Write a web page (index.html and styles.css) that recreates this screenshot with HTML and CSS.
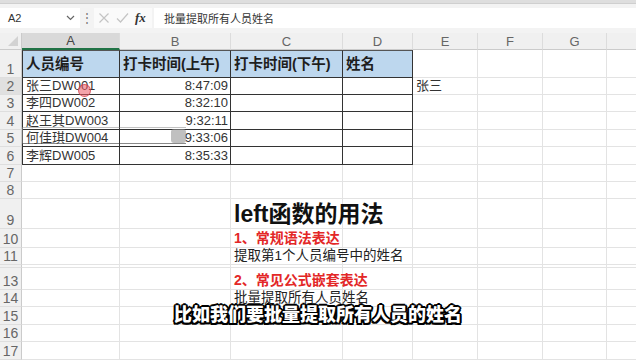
FILE: index.html
```html
<!DOCTYPE html>
<html lang="zh-CN">
<head>
  <meta charset="UTF-8">
  <title>left函数的用法</title>
  <link rel="stylesheet" href="styles.css">
</head>
<body>
  <div class="app">
    <div class="ribbon-edge"></div>
    <div class="formula-bar">
      <div class="name-box">
        <span>A2</span>
        <svg class="chevron" width="9" height="6" viewBox="0 0 9 6"><path d="M1 1 L4.5 4.5 L8 1" fill="none" stroke="#666" stroke-width="1.2"/></svg>
      </div>
      <div class="dots">⋮</div>
      <div class="fx-icons">
        <svg width="12" height="12" viewBox="0 0 12 12"><path d="M1.5 1.5 L10.5 10.5 M10.5 1.5 L1.5 10.5" stroke="#c4c4c4" stroke-width="1.2"/></svg>
        <svg width="13" height="12" viewBox="0 0 13 12"><path d="M1 6.5 L4.5 10 L12 1.5" fill="none" stroke="#c4c4c4" stroke-width="1.2"/></svg>
        <span class="fx">fx</span>
      </div>
      <div class="formula-input">批量提取所有人员姓名</div>
    </div>

    <div class="sheet" id="sheet"></div>

    <!-- 录屏残留的选区和鼠标 -->
    <div class="drag-box"><span class="drag-handle"></span></div>
    <div class="cursor-dot"></div>
    <div class="subtitle">比如我们要批量提取所有人员的姓名</div>
  </div>

  <script>
    // H 列只露出一截，标题字母在画面外
    const cols = ['A', 'B', 'C', 'D', 'E', 'F', 'G', 'H'];
    const visibleLetters = ['A', 'B', 'C', 'D', 'E', 'F', 'G'];
    const totalRows = 17;

    const data = {
      A1: '人员编号', B1: '打卡时间(上午)', C1: '打卡时间(下午)', D1: '姓名',
      A2: '张三DW001', B2: '8:47:09', E2: '张三',
      A3: '李四DW002', B3: '8:32:10',
      A4: '赵王其DW003', B4: '9:32:11',
      A5: '何佳琪DW004', B5: '9:33:06',
      A6: '李辉DW005', B6: '8:35:33',
      C9: 'left函数的用法',
      C10: '1、常规语法表达',
      C11: '提取第1个人员编号中的姓名',
      C13: '2、常见公式嵌套表达',
      C14: '批量提取所有人员姓名'
    };

    const extra = {
      C9: 'title', C10: 'note red', C11: 'note', C13: 'note red', C14: 'note'
    };

    const sheet = document.getElementById('sheet');

    function add(cls, text) {
      const div = document.createElement('div');
      div.className = cls;
      if (text) div.textContent = text;
      sheet.appendChild(div);
      return div;
    }

    // 列标题
    add('corner');
    cols.forEach(c => {
      const label = visibleLetters.includes(c) ? c : '';
      add('col-head' + (c === 'A' ? ' selected' : ''), label);
    });

    // 行
    for (let r = 1; r <= totalRows; r++) {
      add('row-head' + (r === 2 ? ' selected' : ''), String(r));
      cols.forEach((c, i) => {
        const key = c + r;
        let cls = 'cell';
        const inTable = i < 4 && r <= 6;
        if (inTable) {
          cls += ' tb';
          if (r === 1) cls += ' tb-top th';
          if (i === 0) cls += ' tb-left';
          if (c === 'B' && r > 1) cls += ' num';
        }
        if (extra[key]) cls += ' ' + extra[key];
        add(cls, data[key]);
      });
    }
  </script>
</body>
</html>
```

FILE: styles.css
```css
* {
  box-sizing: border-box;
}
body {
  margin: 0;
  background-color: #fff;
  font-family: "Liberation Sans", "Noto Sans CJK SC", sans-serif;
  overflow: hidden;
}
.app {
  position: relative;
  width: 636px;
  height: 360px;
  overflow: hidden;
}
.ribbon-edge {
  height: 4px;
  background-color: #dedede;
  border-bottom: 1px solid #cfcfcf;
}
.formula-bar {
  height: 29px;
  display: flex;
  align-items: center;
  padding: 3px 0 5px;
  background-color: #f3f3f3;
}
.name-box {
  width: 80px;
  height: 20px;
  background-color: #fff;
  display: flex;
  align-items: center;
  justify-content: space-between;
  padding: 0 5px 0 8px;
  font-size: 11px;
  color: #333;
}
.dots {
  width: 14px;
  text-align: center;
  font-size: 12px;
  color: #777;
}
.fx-icons {
  width: 58px;
  height: 20px;
  display: flex;
  align-items: center;
  gap: 6px;
  padding-left: 4px;
  background-color: #fafafa;
}
.fx {
  font-family: "Liberation Serif", serif;
  font-style: italic;
  font-weight: bold;
  font-size: 13px;
  color: #333;
}
.formula-input {
  flex: 1;
  height: 20px;
  margin-left: 2px;
  background-color: #fff;
  padding-left: 10px;
  display: flex;
  align-items: center;
  font-size: 11px;
  color: #333;
}
.sheet {
  display: grid;
  width: 700px;
  grid-template-columns: 22px 98px 111px 112px 70px 65px 65px 64px 93px;
  grid-template-rows: 17px 28px 17px 17px 18px 17px 18px 17px 17px 30px 19px 17px 3px 22px 17px 18px 17px 18px;
}
.corner {
  background-color: #f0f0f0;
  border-bottom: 1px solid #cbcbcb;
  border-right: 1px solid #cbcbcb;
  position: relative;
}
.corner::after {
  content: "";
  position: absolute;
  right: 3px;
  bottom: 3px;
  border-left: 10px solid transparent;
  border-bottom: 10px solid #d2d2d2;
}
.col-head {
  background-color: #f0f0f0;
  border-bottom: 1px solid #cbcbcb;
  border-right: 1px solid #dcdcdc;
  display: flex;
  align-items: center;
  justify-content: center;
  font-size: 13px;
  color: #666;
}
.col-head.selected {
  background-color: #d9d9d9;
  border-bottom: 2px solid #217346;
  color: #444;
}
.row-head {
  background-color: #f0f0f0;
  border-right: 1px solid #cbcbcb;
  border-bottom: 1px solid #dedede;
  display: flex;
  align-items: flex-end;
  justify-content: center;
  font-size: 14px;
  line-height: 16px;
  color: #666;
  overflow: hidden;
}
.row-head.selected {
  background-color: #e0e0e0;
}
.cell {
  border-right: 1px solid #e3e3e3;
  border-bottom: 1px solid #e3e3e3;
  display: flex;
  align-items: flex-end;
  padding: 0 3px 0 3px;
  white-space: nowrap;
  font-size: 13px;
  line-height: 16px;
  color: #333;
  min-width: 0;
}
.cell.tb {
  border-right-color: #333;
  border-bottom-color: #333;
}
.cell.tb-top {
  border-top: 1px solid #555;
}
.cell.tb-left {
  border-left: 1px solid #333;
}
.cell.th {
  background-color: #bdd7ee;
  align-items: center;
  font-size: 14.5px;
  font-weight: bold;
  color: #1e1e1e;
}
.cell.num {
  justify-content: flex-end;
  padding-right: 2px;
}
.cell.title {
  font-size: 23px;
  line-height: 28px;
  font-weight: bold;
  color: #111;
}
.cell.note {
  font-size: 13.5px;
  line-height: 17px;
  color: #222;
}
.cell.red {
  font-size: 14px;
  font-weight: bold;
  color: #e32727;
}
.drag-box {
  position: absolute;
  left: 22px;
  top: 127px;
  width: 164px;
  height: 17px;
  border-left: 1px solid #666;
  border-top: 1px solid rgba(120,120,120,0.45);
  border-bottom: 1px solid rgba(60,60,60,0.6);
}
.drag-handle {
  position: absolute;
  right: 0;
  top: 1px;
  width: 15px;
  height: 14px;
  border-radius: 3px;
  background-color: rgba(150,150,150,0.6);
}
.cursor-dot {
  position: absolute;
  left: 78px;
  top: 84px;
  width: 13px;
  height: 13px;
  border-radius: 50%;
  background-color: rgba(235,90,100,0.55);
  border: 1px solid rgba(210,60,70,0.7);
}
.subtitle {
  position: absolute;
  left: 0;
  right: 0;
  top: 302px;
  text-align: center;
  font-family: "Noto Sans CJK SC", sans-serif;
  font-size: 18px;
  font-weight: 900;
  line-height: 22px;
  color: #fff;
  text-shadow: -1.5px -1.5px 0 #000, 1.5px -1.5px 0 #000, -1.5px 1.5px 0 #000, 1.5px 1.5px 0 #000,
    0 -2px 0 #000, 0 2px 0 #000, -2px 0 0 #000, 2px 0 0 #000;
}
```
